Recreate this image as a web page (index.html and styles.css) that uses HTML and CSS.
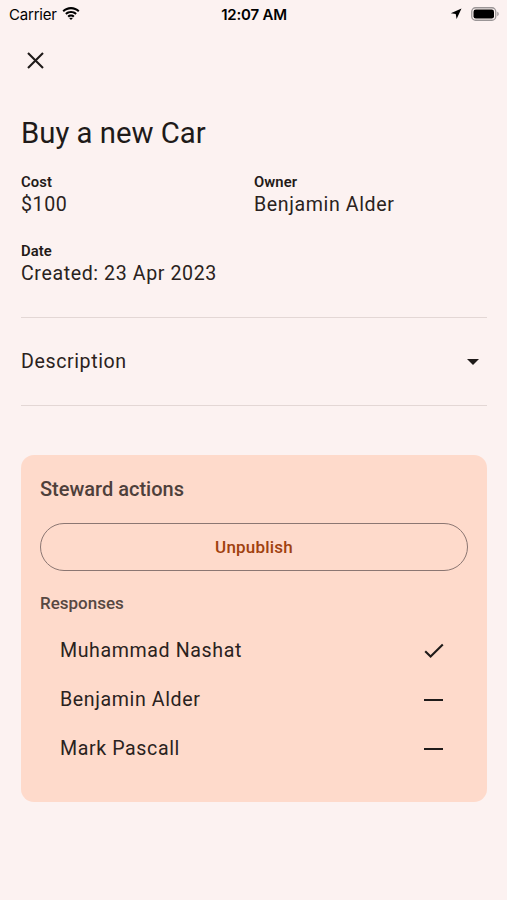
FILE: index.html
```html
<!DOCTYPE html>
<html lang="en">
<head>
    <meta charset="UTF-8">
    <title>Buy a new Car</title>
    <link rel="stylesheet" href="styles.css">
</head>
<body>
<div class="status">
    <div class="status-left">
        <span>Carrier</span>
        <svg class="wifi" width="18" height="13" viewBox="0 0 18 13">
            <path d="M9 2.2c2.7 0 5.2 1 7.1 2.8l1.4-1.5C15.2 1.3 12.2 0 9 0S2.8 1.3.5 3.5L1.9 5C3.8 3.2 6.3 2.2 9 2.2z" fill="#000"/>
            <path d="M9 6c1.7 0 3.2.6 4.4 1.7l1.4-1.5C13.3 4.8 11.2 3.9 9 3.9S4.7 4.8 3.2 6.2l1.4 1.5C5.8 6.6 7.3 6 9 6z" fill="#000"/>
            <path d="M9 9.6c.8 0 1.5.3 2 .8l1.5-1.5C11.6 8 10.4 7.5 9 7.5s-2.6.5-3.5 1.4L7 10.4c.5-.5 1.2-.8 2-.8zM9 13l1.9-2L9 10.7 7.1 11z" fill="#000"/>
        </svg>
    </div>
    <div class="status-time">12:07 AM</div>
    <div class="status-right">
        <svg width="12" height="12" viewBox="0 0 12 12">
            <path d="M11.5.5L.8 5.2l4.9.9.9 4.9z" fill="#000"/>
        </svg>
        <svg width="28" height="14" viewBox="0 0 28 14">
            <rect x="0.75" y="0.75" width="24" height="12.5" rx="3.8" fill="none" stroke="#9a9596" stroke-width="1.3"/>
            <rect x="2.5" y="2.5" width="20.5" height="9" rx="2.3" fill="#000"/>
            <path d="M26.3 4.8v4.4c.9-.3 1.4-1.2 1.4-2.2s-.5-1.9-1.4-2.2z" fill="#9a9596"/>
        </svg>
    </div>
</div>

<div class="toolbar">
    <svg width="17" height="17" viewBox="0 0 17 17">
        <path d="M1 1l15 15M16 1L1 16" stroke="#1f1b1a" stroke-width="2.1" fill="none"/>
    </svg>
</div>

<div class="page">
    <h1 class="title">Buy a new Car</h1>

    <div class="facts">
        <div class="fact">
            <div class="label">Cost</div>
            <div class="value">$100</div>
        </div>
        <div class="fact">
            <div class="label">Owner</div>
            <div class="value">Benjamin Alder</div>
        </div>
        <div class="fact">
            <div class="label">Date</div>
            <div class="value">Created: 23 Apr 2023</div>
        </div>
    </div>

    <div class="expander">
        <span>Description</span>
        <svg width="12" height="6" viewBox="0 0 12 6">
            <path d="M0 0h12L6 6z" fill="#1f1b1a"/>
        </svg>
    </div>

    <div class="card">
        <div class="card-title">Steward actions</div>
        <button class="outline-btn">Unpublish</button>
        <div class="sub-title">Responses</div>
        <ul class="responses">
            <li>
                <span>Muhammad Nashat</span>
                <svg width="20" height="16" viewBox="0 0 20 16">
                    <path d="M1.2 8.2l5.4 5.4L18.8 1.4" stroke="#1f1b1a" stroke-width="2.1" fill="none"/>
                </svg>
            </li>
            <li>
                <span>Benjamin Alder</span>
                <span class="dash"></span>
            </li>
            <li>
                <span>Mark Pascall</span>
                <span class="dash"></span>
            </li>
        </ul>
    </div>
</div>
</body>
</html>
```

FILE: styles.css
```css
/* reset */
body,h1,ul,li,button{margin:0;padding:0}
ul{list-style:none}
body{
    background: #fcf2f1;
    font-family: Roboto, "Noto Sans", sans-serif;
    color: #231a18;
}

/* status bar */
.status {
    height: 28px;
    display: flex;
    align-items: center;
    justify-content: space-between;
    padding: 0 8px 0 9px;
    font-family: Inter, "Liberation Sans", sans-serif;
    font-size: 15px;
    color: #000;
}
.status-left {
    width: 120px;
    display: flex;
    align-items: center;
    gap: 5px;
    letter-spacing: -0.2px;
}
.status-left .wifi {
    margin-top: -2px;
}
.status-time {
    font-weight: 600;
    letter-spacing: -0.2px;
}
.status-right {
    width: 120px;
    display: flex;
    align-items: center;
    justify-content: flex-end;
    gap: 9px;
}

.toolbar {
    height: 64px;
    display: flex;
    align-items: center;
    padding-left: 27px;
}

.page {
    margin: 0 20px 0 21px;
}

.title {
    margin-top: 23px;
    font-size: 29.3px;
    line-height: 36px;
    font-weight: 400;
    color: #201a19;
}

.facts {
    display: grid;
    grid-template-columns: 1fr 1fr;
    row-gap: 23px;
    margin-top: 21px;
    padding-bottom: 30px;
    border-bottom: 1.5px solid #e3d7d5;
}
.label {
    font-size: 14.8px;
    line-height: 20px;
    font-weight: 600;
    letter-spacing: 0.1px;
}
.value {
    font-size: 19.6px;
    line-height: 26px;
    letter-spacing: 0.6px;
    color: #2a2220;
}

.expander {
    height: 87px;
    display: flex;
    align-items: center;
    justify-content: space-between;
    padding-right: 8px;
    font-size: 19.6px;
    letter-spacing: 0.6px;
    color: #2a2220;
    border-bottom: 1.5px solid #e3d7d5;
}

.card {
    margin-top: 49px;
    background: #fedacb;
    border-radius: 13px;
    padding: 21px 19px 29px;
}
.card-title {
    font-size: 20px;
    line-height: 26px;
    font-weight: 500;
    color: #4e403b;
}
.outline-btn {
    display: block;
    width: 100%;
    height: 48px;
    margin-top: 21px;
    border: 1.3px solid #8b7672;
    border-radius: 24px;
    background: transparent;
    font-family: Roboto, sans-serif;
    font-size: 17px;
    font-weight: 500;
    letter-spacing: 0.2px;
    color: #a0410f;
}
.sub-title {
    margin-top: 21px;
    font-size: 17px;
    line-height: 22px;
    font-weight: 500;
    color: #574842;
}
.responses {
    margin-top: 12px;
}
.responses li {
    height: 49px;
    display: flex;
    align-items: center;
    justify-content: space-between;
    padding: 0 24px 0 20px;
    font-size: 19.6px;
    letter-spacing: 0.6px;
    color: #2a2220;
}
.dash {
    width: 19px;
    height: 2px;
    margin-right: 1px;
    background: #1f1b1a;
}
```
